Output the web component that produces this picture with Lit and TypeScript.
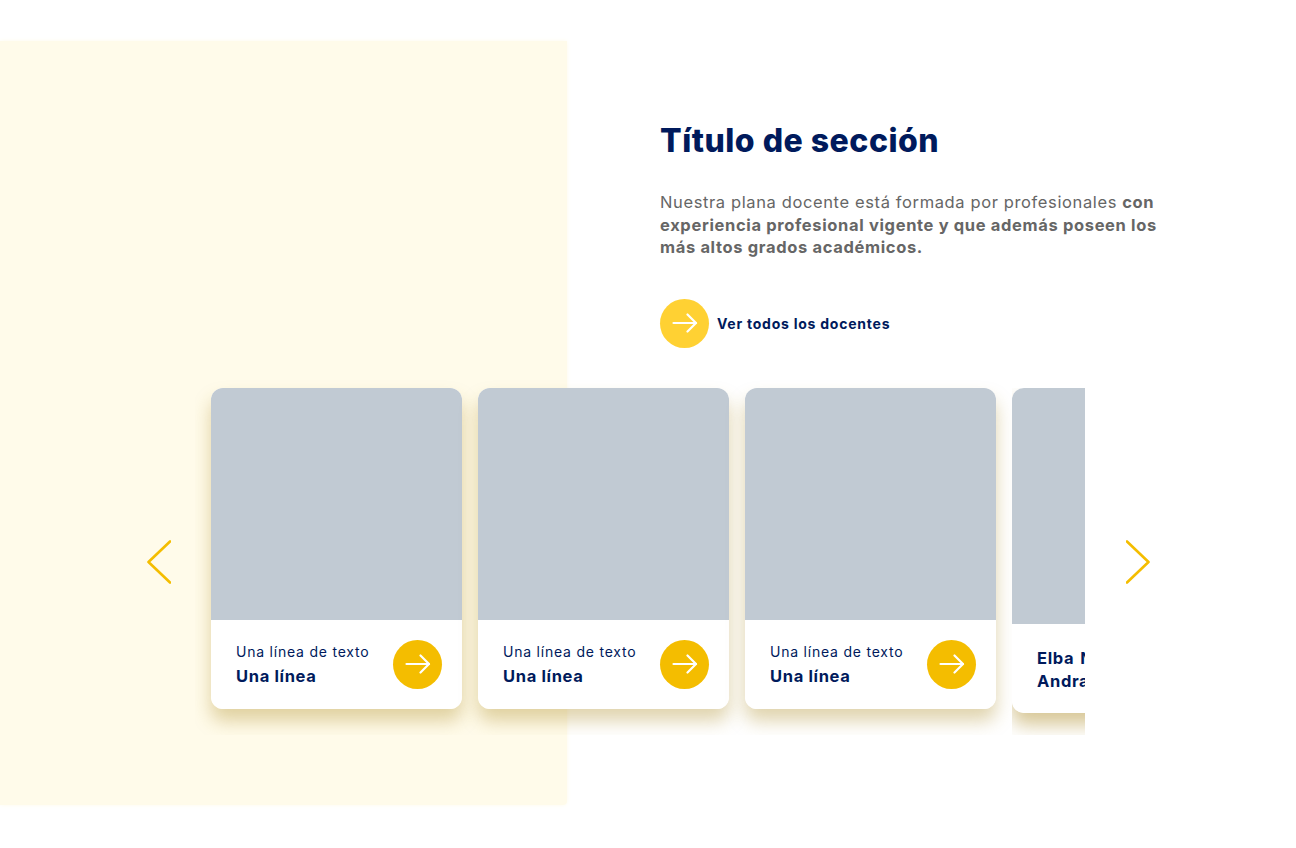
import { LitElement, html, css, svg } from "lit";
import { customElement } from "lit/decorators.js";

const arrow = svg`<svg class="arrow" width="26" height="20" viewBox="0 0 26 20" fill="none" stroke="#fff" stroke-width="2.2" stroke-linecap="round" stroke-linejoin="round"><path d="M1.5 10H24"/><path d="M15.5 1.5L24 10L15.5 18.5"/></svg>`;

@customElement("app-root")
export class AppRoot extends LitElement {
  static styles = css`
    :host { display: block; position: relative; width: 1296px; height: 848px; background: #fff; overflow: hidden;
      font-family: Inter, "Liberation Sans", sans-serif; }
    * { box-sizing: border-box; }
    .panel { position: absolute; left: 0; top: 41px; width: 567px; height: 764px; background: #fffbea; border-radius: 0 0 4px 0; box-shadow: 0 0 4px #fffbea; }
    .page { position: relative; display: flex; flex-direction: column; height: 100%; }
    .intro { margin-left: 660px; width: 510px; padding-top: 122px; display: flex; flex-direction: column; }
    h2 { margin: 0; font-size: 32px; line-height: 38px; font-weight: 800; color: #001a5c; letter-spacing: 0.5px; }
    p { margin: 31px 0 0; font-size: 16.5px; line-height: 22.5px; color: #666; letter-spacing: 0.62px; width: 510px; white-space: nowrap; }
    p b { font-weight: 700; letter-spacing: 0.65px; }
    .cta { display: flex; align-items: center; gap: 8px; margin-top: 40px; font-size: 14px; font-weight: 700; color: #001a5c; letter-spacing: 0.76px; }
    .circle { width: 49px; height: 49px; border-radius: 50%; display: flex; align-items: center; justify-content: center; flex: none; }
    .cta .circle { background: #ffd133; }
    .row { display: flex; align-items: flex-start; margin: 24px 0 0 147px; }
    .chev { flex: none; margin-top: 168px; display: block; }
    .viewport { width: 890px; height: 363px; overflow: hidden; margin: 0 41px 0 24px; padding: 16px 0 0 16px; display: flex; gap: 16px; align-items: flex-start; }
    .card { flex: none; width: 251px; height: 321px; border-radius: 12px; background: #fff; overflow: hidden; display: flex; flex-direction: column; }
    .shadow { flex: none; border-radius: 12px; box-shadow: 0 12px 18px rgba(170, 135, 30, 0.36); }
    .img { height: 232px; flex: none; background: #c1cad3; }
    .body { flex: 1; display: flex; align-items: flex-start; justify-content: space-between; padding: 20px 20px 0 25px; }
    .text { margin-top: 2px; }
    .l1 { font-size: 14px; line-height: 20px; color: #001a5c; letter-spacing: 0.78px; white-space: nowrap; }
    .l2 { font-size: 16.5px; line-height: 22px; margin-top: 3px; font-weight: 700; color: #001a5c; letter-spacing: 0.65px; white-space: nowrap; }
    .body .circle { background: #f4bd00; }
    .clip { flex: none; width: 73px; height: 347px; overflow: hidden; }
    .clip .shadow { width: 251px; box-shadow: 0 12px 18px rgba(170, 135, 30, 0.46); }
    .last { height: 325px; }
    .last .img { height: 236px; }
    .last .body { padding-top: 23px; }
    .last .name { font-size: 16.5px; line-height: 23px; font-weight: 700; color: #001a5c; white-space: nowrap; letter-spacing: 0.65px; word-spacing: 1.5px; }
  `;

  private chev(d: string) {
    return html`<svg class="chev" width="24" height="44" viewBox="0 0 24 44" fill="none" stroke="#f4bd00" stroke-width="2.6" stroke-linecap="round" stroke-linejoin="round"><path d=${d}/></svg>`;
  }

  private card() {
    return html`<div class="shadow"><article class="card">
      <div class="img"></div>
      <div class="body">
        <div class="text"><div class="l1">Una línea de texto</div><div class="l2">Una línea</div></div>
        <div class="circle">${arrow}</div>
      </div>
    </article></div>`;
  }

  render() {
    return html`
      <div class="panel"></div>
      <div class="page">
        <section class="intro">
          <h2>Título de sección</h2>
          <p>Nuestra plana docente está formada por profesionales <b>con<br>experiencia profesional vigente y que además poseen los<br>más altos grados académicos.</b></p>
          <div class="cta"><span class="circle">${arrow}</span>Ver todos los docentes</div>
        </section>
        <section class="row">
          ${this.chev("M23 1.5L1.5 22L23 42.5")}
          <div class="viewport">
            ${this.card()}${this.card()}${this.card()}
            <div class="clip"><div class="shadow"><article class="card last">
              <div class="img"></div>
              <div class="body"><div class="name">Elba Núñez<br>Andrade</div></div>
            </article></div></div>
          </div>
          ${this.chev("M1 1.5L22.5 22L1 42.5")}
        </section>
      </div>`;
  }
}
